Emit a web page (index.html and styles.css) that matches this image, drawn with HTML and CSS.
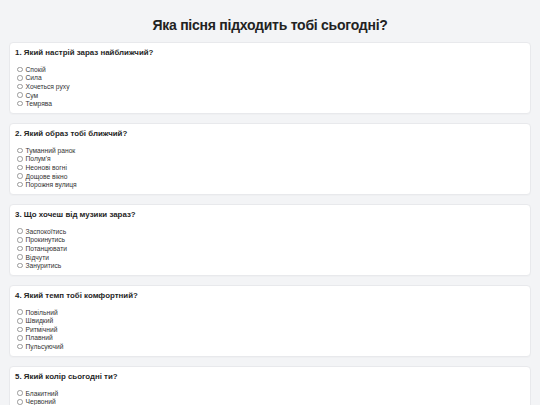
FILE: index.html
```html
<!DOCTYPE html>
<html lang="uk">
<head>
<meta charset="utf-8">
<link rel="stylesheet" href="styles.css">
</head>
<body>
<h1 class="title">Яка пісня підходить тобі сьогодні?</h1>
<div class="quiz">
  <div class="card">
    <div class="q">1. Який настрій зараз найближчий?</div>
    <label class="opt"><input type="radio" name="q1"><span>Спокій</span></label>
    <label class="opt"><input type="radio" name="q1"><span>Сила</span></label>
    <label class="opt"><input type="radio" name="q1"><span>Хочеться руху</span></label>
    <label class="opt"><input type="radio" name="q1"><span>Сум</span></label>
    <label class="opt"><input type="radio" name="q1"><span>Темрява</span></label>
  </div>
  <div class="card">
    <div class="q">2. Який образ тобі ближчий?</div>
    <label class="opt"><input type="radio" name="q2"><span>Туманний ранок</span></label>
    <label class="opt"><input type="radio" name="q2"><span>Полум'я</span></label>
    <label class="opt"><input type="radio" name="q2"><span>Неонові вогні</span></label>
    <label class="opt"><input type="radio" name="q2"><span>Дощове вікно</span></label>
    <label class="opt"><input type="radio" name="q2"><span>Порожня вулиця</span></label>
  </div>
  <div class="card">
    <div class="q">3. Що хочеш від музики зараз?</div>
    <label class="opt"><input type="radio" name="q3"><span>Заспокоїтись</span></label>
    <label class="opt"><input type="radio" name="q3"><span>Прокинутись</span></label>
    <label class="opt"><input type="radio" name="q3"><span>Потанцювати</span></label>
    <label class="opt"><input type="radio" name="q3"><span>Відчути</span></label>
    <label class="opt"><input type="radio" name="q3"><span>Зануритись</span></label>
  </div>
  <div class="card">
    <div class="q">4. Який темп тобі комфортний?</div>
    <label class="opt"><input type="radio" name="q4"><span>Повільний</span></label>
    <label class="opt"><input type="radio" name="q4"><span>Швидкий</span></label>
    <label class="opt"><input type="radio" name="q4"><span>Ритмічний</span></label>
    <label class="opt"><input type="radio" name="q4"><span>Плавний</span></label>
    <label class="opt"><input type="radio" name="q4"><span>Пульсуючий</span></label>
  </div>
  <div class="card">
    <div class="q">5. Який колір сьогодні ти?</div>
    <label class="opt"><input type="radio" name="q5"><span>Блакитний</span></label>
    <label class="opt"><input type="radio" name="q5"><span>Червоний</span></label>
    <label class="opt"><input type="radio" name="q5"><span>Фіолетовий</span></label>
    <label class="opt"><input type="radio" name="q5"><span>Сірий</span></label>
    <label class="opt"><input type="radio" name="q5"><span>Чорний</span></label>
  </div>
</div>
</body>
</html>
```
FILE: styles.css
```css
html, body {
  margin: 0;
  padding: 0;
  background: #f3f4f6;
  font-family: "Liberation Sans", Arial, sans-serif;
  color: #222;
}
body {
  padding: 0 9px;
}
.title {
  margin: 0;
  padding-top: 15px;
  height: 27px;
  font-size: 14px;
  line-height: 20px;
  font-weight: bold;
  letter-spacing: -0.25px;
  text-align: center;
  color: #222;
}
.quiz {
  display: flex;
  flex-direction: column;
  gap: 9px;
}
.card {
  background: #fff;
  border: 1px solid #e8e9ec;
  border-radius: 4px;
  box-shadow: 0 1px 1px rgba(0,0,0,0.02);
  padding: 5px 5px 5px 5px;
  display: flex;
  flex-direction: column;
}
.q {
  font-size: 7.9px;
  line-height: 10px;
  font-weight: bold;
  margin-bottom: 7px;
  color: #1f1f1f;
}
.opt {
  display: flex;
  align-items: center;
  height: 8.6px;
  font-size: 6.7px;
  color: #333;
}
.opt input {
  appearance: none;
  -webkit-appearance: none;
  margin: 0 3px 0 2px;
  width: 5.5px;
  height: 5.5px;
  border: 0.6px solid #999;
  border-radius: 50%;
  background: #fff;
  flex: none;
}
```
